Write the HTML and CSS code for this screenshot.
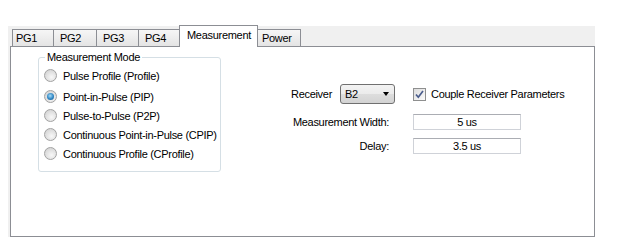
FILE: index.html
```html
<!DOCTYPE html>
<html lang="en">
<head>
    <meta charset="UTF-8">
    <title>Measurement</title>
    <link rel="stylesheet" href="styles.css">
</head>
<body>
    <div class="tabctl">
        <div class="tabs">
            <div class="tab">PG1</div>
            <div class="tab">PG2</div>
            <div class="tab">PG3</div>
            <div class="tab">PG4</div>
            <div class="tab active">Measurement</div>
            <div class="tab">Power</div>
        </div>
        <div class="page">
            <fieldset class="group">
                <legend>Measurement Mode</legend>
                <label class="opt"><span class="radio"></span>Pulse Profile (Profile)</label>
                <label class="opt"><span class="radio checked"></span>Point-in-Pulse (PIP)</label>
                <label class="opt"><span class="radio"></span>Pulse-to-Pulse (P2P)</label>
                <label class="opt"><span class="radio"></span>Continuous Point-in-Pulse (CPIP)</label>
                <label class="opt"><span class="radio"></span>Continuous Profile (CProfile)</label>
            </fieldset>

            <div class="params">
                <div class="receiver-row">
                    <span class="receiver-label">Receiver</span>
                    <div class="combo">
                        <span>B2</span>
                        <span class="arrow"></span>
                    </div>
                    <label class="check">
                        <span class="box">
                            <svg width="11" height="11" viewBox="0 0 11 11">
                                <path d="M2 5.5 L4.3 8.2 L9 2" fill="none" stroke="#4a5c8c" stroke-width="1.7"/>
                            </svg>
                        </span>
                        Couple Receiver Parameters
                    </label>
                </div>
                <div class="fields">
                    <span class="lbl">Measurement Width:</span>
                    <div class="textbox">5 us</div>
                    <span class="lbl">Delay:</span>
                    <div class="textbox">3.5 us</div>
                </div>
            </div>
        </div>
    </div>
</body>
</html>
```

FILE: styles.css
```css
body {
    margin: 0;
    background: #fff;
    font-family: "Liberation Sans", Arial, sans-serif;
    font-size: 11px;
    letter-spacing: -0.3px;
    color: #000;
}

/* tab control */
.tabctl {
    box-sizing: border-box;
    width: 587px;
    margin: 26px 0 0 8px;
    padding-left: 2px;
    background: #f0f0f0;
}
.tabs {
    display: flex;
    align-items: flex-end;
    height: 20px;
    padding-left: 2px;
}
.tab {
    box-sizing: border-box;
    height: 17px;
    margin-right: -1px;
    padding-left: 6px;
    border: 1px solid #8c8e94;
    border-bottom: none;
    background: linear-gradient(#f6f6f6, #e4e4e4);
    line-height: 16px;
    white-space: nowrap;
}
.tab:nth-child(1) { width: 42px; padding-left: 3px; }
.tab:nth-child(2) { width: 44px; }
.tab:nth-child(3) { width: 43px; }
.tab:nth-child(4) { width: 42px; }
.tab:nth-child(5) { width: 79px; }
.tab:nth-child(6) { width: 44px; padding-left: 4px; }
.tab.active {
    position: relative;
    z-index: 1;
    height: 22px;
    margin-bottom: -1px;
    padding-left: 7px;
    background: #fff;
    line-height: 18px;
}
.page {
    box-sizing: border-box;
    display: flex;
    align-items: flex-start;
    height: 191px;
    padding: 4px 0 0 27px;
    border: 1px solid #8c8e94;
    background: #fff;
}

/* group box */
.group {
    box-sizing: border-box;
    width: 183px;
    height: 121px;
    margin: 0;
    padding: 0 0 0 5px;
    border: 1px solid #d5dfe5;
    border-radius: 3px;
}
.group legend {
    padding: 0 2px;
    margin-left: 1px;
    line-height: 13px;
}
.opt {
    display: flex;
    align-items: center;
    height: 19px;
}
.opt:first-of-type {
    margin: 2px 0 2px;
}
.radio {
    box-sizing: border-box;
    display: flex;
    align-items: center;
    justify-content: center;
    width: 13px;
    height: 13px;
    margin-right: 6px;
    border: 1px solid #a2a2a2;
    border-radius: 50%;
    background: radial-gradient(circle at 60% 65%, #f8f8f8, #d9d9d9 70%, #cfcfcf);
}
.radio.checked::after {
    content: "";
    width: 7px;
    height: 7px;
    border-radius: 50%;
    background: radial-gradient(circle at 45% 40%, #a8dcf7, #2f86c4 55%, #15507f);
}

/* right side parameters */
.params {
    margin: 33px 0 0 70px;
}
.receiver-row {
    display: flex;
    align-items: center;
    height: 20px;
}
.receiver-label {
    width: 49px;
}
.combo {
    box-sizing: border-box;
    display: flex;
    align-items: center;
    width: 55px;
    height: 20px;
    padding-left: 4px;
    border: 1px solid #707070;
    border-radius: 3px;
    background: linear-gradient(#f3f3f3 0%, #ebebeb 50%, #dddddd 51%, #d3d3d3 100%);
}
.arrow {
    margin-left: auto;
    margin-right: 5px;
    border-top: 4px solid #000;
    border-left: 3.5px solid transparent;
    border-right: 3.5px solid transparent;
}
.check {
    display: flex;
    align-items: center;
    margin-left: 18px;
}
.box {
    box-sizing: border-box;
    display: flex;
    align-items: center;
    justify-content: center;
    width: 13px;
    height: 13px;
    margin-right: 5px;
    border: 1px solid #8e8f8f;
    background: linear-gradient(135deg, #dcdcdc, #fbfbfb);
}
.fields {
    display: grid;
    grid-template-columns: 98px 108px;
    column-gap: 24px;
    row-gap: 8px;
    align-items: center;
    margin-top: 10px;
}
.lbl {
    text-align: right;
    white-space: nowrap;
}
.textbox {
    box-sizing: border-box;
    height: 16px;
    border: 1px solid #cfd2d8;
    border-top-color: #abadb3;
    text-align: center;
    line-height: 14px;
}
```
